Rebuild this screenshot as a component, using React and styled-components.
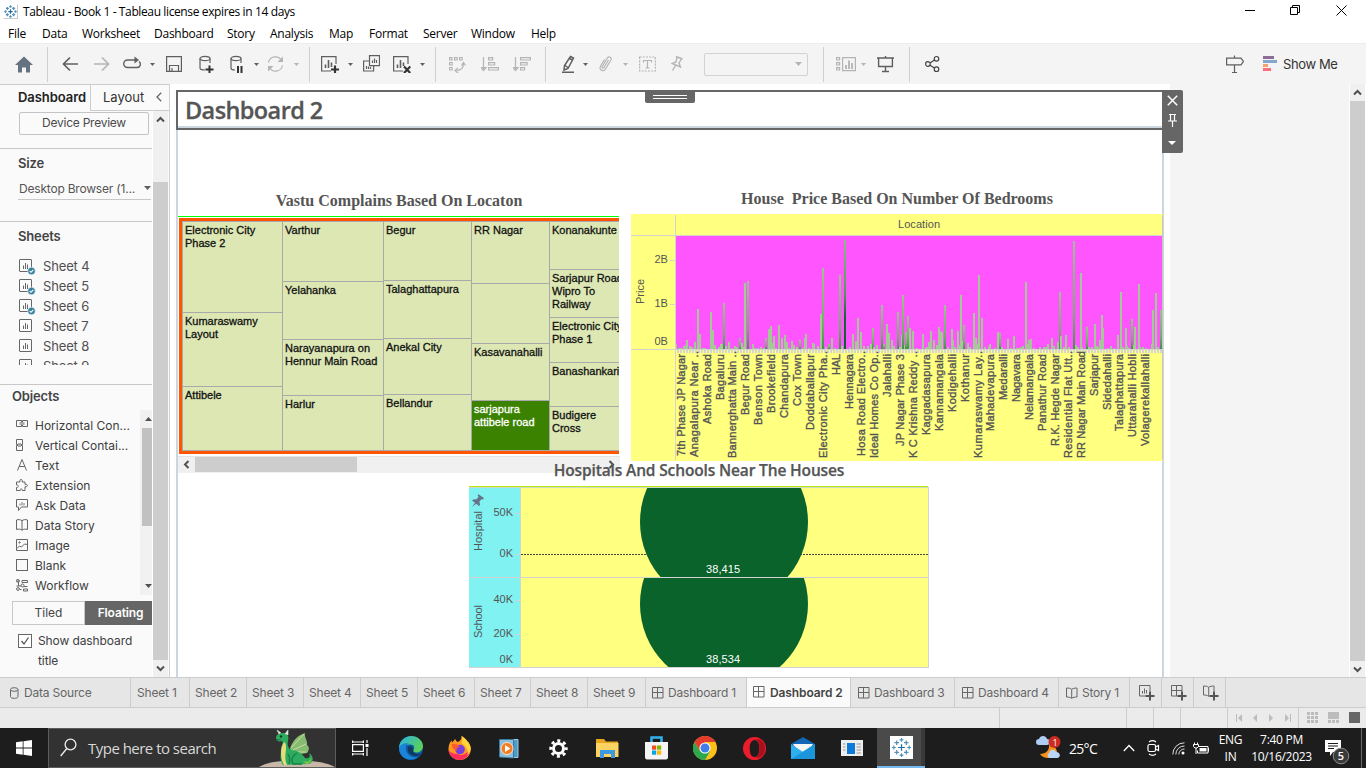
import React from "react";
import styled, { createGlobalStyle, css } from "styled-components";

const UI = `"Open Sans", "Noto Sans", sans-serif`;
const TAB = `Inter, "Open Sans", sans-serif`;
const ARIAL = `"Liberation Sans", Arial, sans-serif`;

const Global = createGlobalStyle`
  * { box-sizing: border-box; }
  body { margin: 0; overflow: hidden; font-family: ${UI}; }
  svg { display: block; flex: none; }
`;

const Window = styled.div`
  width: 1366px;
  height: 768px;
  display: flex;
  flex-direction: column;
  background: #fff;
  overflow: hidden;
`;

/* ---------- title and menu ---------- */
const TitleBar = styled.div`
  height: 23px;
  display: flex;
  align-items: center;
  padding-left: 3px;
  font-size: 12px;
  letter-spacing: -0.38px;
  color: #000;
`;
const TitleText = styled.span`
  margin-left: 5px;
  flex: 1;
`;
const WinButtons = styled.div`
  display: flex;
  align-items: center;
  margin-top: -3px;
`;
const WinButton = styled.div`
  width: ${(p) => p.$w}px;
  display: flex;
  justify-content: center;
`;
const MenuBar = styled.div`
  height: 20px;
  display: flex;
  padding-left: 8px;
  font-size: 12px;
  line-height: 21px;
  letter-spacing: -0.25px;
  color: #000;
`;
const MenuItem = styled.span`
  width: ${(p) => p.$w}px;
  white-space: nowrap;
`;

/* ---------- toolbar ---------- */
const Toolbar = styled.div`
  height: 41px;
  border-top: 1px solid #ededed;
  background: #f4f4f4;
  display: flex;
  align-items: center;
`;
const Tool = styled.svg.attrs((p) => ({
  width: p.$w,
  height: 18,
  viewBox: `0 0 ${p.$w} 18`,
  fill: "none",
  stroke: p.$dim ? "#b4b4b4" : "#5f5f5f",
  strokeWidth: 1.2,
}))`
  margin-left: ${(p) => p.$ml}px;
`;
const Sep = styled.div`
  width: 1px;
  height: 35px;
  margin-left: ${(p) => p.$ml}px;
  background: #cfcfcf;
`;
const CaretSvg = styled.svg`
  margin-left: ${(p) => p.$ml || 0}px;
`;
const Combo = styled.div`
  width: 104px;
  height: 23px;
  margin-left: 21px;
  border: 1px solid #d2d2d2;
  border-radius: 2px;
  display: flex;
  align-items: center;
  justify-content: flex-end;
  padding-right: 5px;
`;
const ShowMe = styled.span`
  margin: -1px 0 0 6px;
  font: 13px ${TAB};
  letter-spacing: -0.4px;
  color: #333;
`;

/* ---------- body ---------- */
const Body = styled.div`
  height: 593px;
  display: flex;
  padding-right: 1px;
`;
const Side = styled.aside`
  width: 170px;
  border-top: 1px solid #ccc;
  border-right: 1px solid #d0d0d0;
  background: #fafafa;
  font-family: ${TAB};
  color: #4a4a4a;
  display: flex;
  flex-direction: column;
`;
const SideTabs = styled.div`
  display: flex;
  height: 26px;
  flex: none;
  font-size: 13px;
`;
const SideTab = styled.div`
  width: ${(p) => (p.$active ? 90 : 79)}px;
  display: flex;
  align-items: center;
  justify-content: space-between;
  padding: 0 ${(p) => (p.$active ? "0 2px 18px" : "7px 1px 12px")};
  white-space: nowrap;
  ${(p) =>
    p.$active
      ? css`font-weight: 600; color: #222; letter-spacing: -0.05px;`
      : css`border-left: 1px solid #ccc; border-bottom: 1px solid #ccc; color: #333;`}
`;
const SideBody = styled.div`
  display: flex;
  flex: 1;
  min-height: 0;
`;
const SideContent = styled.div`
  width: 152px;
  overflow: hidden;
`;
const DevicePreview = styled.div`
  margin: 1px 3px 0 19px;
  height: 23px;
  border: 1px solid #c4c4c4;
  border-radius: 2px;
  font-size: 12px;
  letter-spacing: -0.25px;
  line-height: 20px;
  text-align: center;
`;
const Rule = styled.div`
  height: 1px;
  margin-top: ${(p) => p.$mt}px;
  background: #c8c8c8;
`;
const Head = styled.div`
  margin: ${(p) => p.$mt}px 0 0 ${(p) => p.$ml}px;
  height: 16px;
  line-height: 16px;
  font-size: 13px;
  font-weight: 600;
  letter-spacing: -0.15px;
  color: #444;
`;
const SizeSelect = styled.div`
  margin: 6px 1px 0 18px;
  height: 23px;
  border-bottom: 1px solid #c8c8c8;
  display: flex;
  align-items: center;
  justify-content: space-between;
  font-size: 12px;
  color: #555;
  padding-left: 1px;
  letter-spacing: -0.2px;
`;
const SheetList = styled.div`
  margin: 12px 0 0 19px;
  height: 109px;
  overflow: hidden;
`;
const SheetRow = styled.div`
  height: 20px;
  display: flex;
  align-items: center;
  gap: 7px;
  font-size: 13px;
  letter-spacing: -0.15px;
  color: #4f4f4f;
`;
const ObjectArea = styled.div`
  display: flex;
  margin-top: 6px;
  height: 185px;
`;
const ObjectList = styled.div`
  width: 140px;
  padding: 5px 0 0 15px;
`;
const ObjectRow = styled.div`
  height: 20px;
  display: flex;
  align-items: center;
  gap: 6px;
  font-size: 12px;
  color: #404040;
  white-space: nowrap;
`;
const ObjectScroll = styled.div`
  width: 12px;
  background: #f1f1f1;
  display: flex;
  flex-direction: column;
  padding: 7px 0 7px 2px;
`;
const ObjectThumb = styled.div`
  height: 98px;
  margin: 7px 0 auto;
  background: #c1c1c1;
`;
const ModeSwitch = styled.div`
  display: flex;
  margin: 6px 0 0 12px;
  height: 24px;
  font-size: 12px;
  line-height: 22px;
  text-align: center;
`;
const Mode = styled.div`
  width: 73px;
  flex: none;
  border: 1px solid ${(p) => (p.$on ? "#666" : "#c8c8c8")};
  background: ${(p) => (p.$on ? "#666" : "#fafafa")};
  color: ${(p) => (p.$on ? "#fff" : "#444")};
  font-weight: ${(p) => (p.$on ? 600 : 400)};
  padding-right: ${(p) => (p.$on ? 2 : 0)}px;
  letter-spacing: ${(p) => (p.$on ? -0.15 : 0)}px;
`;
const ShowTitle = styled.div`
  display: flex;
  gap: 6px;
  margin: 6px 0 0 18px;
  font-size: 12px;
  line-height: 20px;
  letter-spacing: -0.1px;
  color: #404040;
`;
const VScroll = styled.div`
  width: 16px;
  flex: none;
  background: #f0f0f0;
  border-left: 1px solid #fff;
  display: flex;
  flex-direction: column;
`;
const ScrollBtn = styled.div`
  height: ${(p) => p.$h || 17}px;
  width: ${(p) => (p.$w ? p.$w + "px" : "auto")};
  margin-left: ${(p) => (p.$end ? "auto" : 0)};
  display: flex;
  align-items: center;
  justify-content: center;
`;
const Thumb = styled.div`
  background: #cdcdcd;
  ${(p) => (p.$h ? `height: ${p.$h}px;` : "")}
  ${(p) => (p.$w ? `width: ${p.$w}px;` : "")}
  ${(p) => (p.$mt ? `margin-top: ${p.$mt}px;` : "")}
`;

/* ---------- canvas ---------- */
const Stage = styled.main`
  flex: 1;
  background: #f4f4f4;
  overflow: hidden;
`;
const Page = styled.div`
  width: 1000px;
  height: 593px;
  padding: 6px 6px 0;
  background: #fff;
`;
const Canvas = styled.div`
  width: 988px;
  height: 587px;
  border-left: 2px solid #ccd6e0;
  border-right: 2px solid #ccd6e0;
  position: relative;
`;
const TitleZone = styled.div`
  width: 988px;
  height: 40px;
  margin: 0 -2px;
  border: 2px solid #666;
  box-shadow: inset 0 -2px 0 #ccd6e0;
  padding-left: 7px;
  font: 600 23.5px/36px "Open Sans", sans-serif;
  -webkit-text-stroke: 0.3px;
  letter-spacing: -0.6px;
  color: #555;
`;
const Grip = styled.div`
  position: absolute;
  left: 467px;
  top: 0;
  width: 50px;
  height: 13px;
  border-radius: 0 0 2px 2px;
  background: #666;
  display: flex;
  flex-direction: column;
  align-items: center;
  padding-top: 5px;
  gap: 2px;
`;
const GripLine = styled.div`
  width: 34px;
  height: 1px;
  background: #fff;
`;
const ZoneTools = styled.div`
  position: absolute;
  left: 984px;
  top: 0;
  width: 21px;
  height: 63px;
  border-radius: 0 2px 2px 0;
  background: #666;
  display: flex;
  flex-direction: column;
  align-items: center;
  padding: 5px 1px 0 0;
`;
const ZoneTool = styled.svg`
  margin-top: ${(p) => p.$mt || 0}px;
`;
const TopRow = styled.div`
  display: flex;
  align-items: flex-start;
  gap: 11px;
  margin-top: 58px;
`;
const ZoneTitle = styled.div`
  text-align: center;
  font: 700 16px/20px "Liberation Serif", serif;
  color: #555;
  white-space: pre;
`;
const TreeZone = styled.section`
  width: 442px;
  padding-top: 3px;
`;
const TreeMap = styled.div`
  display: flex;
  width: 441px;
  height: 239px;
  margin-top: 5px;
  overflow: hidden;
  border-top: 1px solid #0f0;
  padding: 1px 0 1px 1px;
`;
const TreeFrame = styled.div`
  display: flex;
  flex: none;
  width: 600px;
  height: 236px;
  border: 3px solid #ff5500;
  background: #dce7b4;
`;
const TreeCol = styled.div`
  width: ${(p) => p.$w}px;
  border-left: 1px solid #a9a9a9;
  border-bottom: 1px solid #a9a9a9;
`;
const TreeCell = styled.div`
  height: ${(p) => p.$h}px;
  border-top: 1px solid #a9a9a9;
  padding: 2px 0 0 2px;
  font: 11px/13px ${ARIAL};
  -webkit-text-stroke: 0.3px;
  white-space: pre;
  color: ${(p) => (p.$dark ? "#fff" : "#111")};
  background: ${(p) => (p.$dark ? "#3b8200" : "#dce7b4")};
`;
const HScroll = styled.div`
  width: 442px;
  height: 17px;
  margin-top: 1px;
  border-top: 1px solid #e4e4e4;
  background: #f0f0f0;
  display: flex;
`;
const PriceZone = styled.section`
  width: 532px;
  padding-top: 1px;
`;
const PriceChart = styled.svg`
  margin-top: 5px;
  font: 11px ${ARIAL};
`;
const HospZone = styled.section`
  width: 460px;
  margin: -13px 0 0 291px;
  position: relative;
`;
const HospTitle = styled(ZoneTitle)`
  font: 600 15.5px/20px "Open Sans", sans-serif;
  letter-spacing: -0.14px;
  -webkit-text-stroke: 0.25px;
`;
const HospChart = styled.svg`
  margin-top: 6px;
  font: 11px ${ARIAL};
`;

/* ---------- bottom bars ---------- */
const TabBar = styled.div`
  height: 31px;
  border-top: 1px solid #ccc;
  border-bottom: 1px solid #ccc;
  background: #e6e6e6;
  display: flex;
  font: 12px ${TAB};
  color: #666;
`;
const SheetTab = styled.div`
  width: ${(p) => p.$w}px;
  border-right: 1px solid #ccc;
  display: flex;
  align-items: center;
  gap: ${(p) => p.$gap ?? 5}px;
  padding: 0 0 ${(p) => (p.$on ? 1 : 0)}px ${(p) => p.$pl ?? 5}px;
  white-space: nowrap;
  letter-spacing: -0.2px;
  ${(p) => p.$on && css`background: #fafafa; color: #444; font-weight: 600; letter-spacing: -0.1px;`}
`;
const StatusBar = styled.div`
  height: 20px;
  background: #ebebeb;
  display: flex;
  justify-content: flex-end;
`;
const StatusCell = styled.div`
  width: ${(p) => p.$w}px;
  border-left: 1px solid #ccc;
  display: flex;
  align-items: center;
  justify-content: space-between;
  padding: 0 ${(p) => p.$pr || 0}px 1px ${(p) => p.$pl || 0}px;
`;
const Taskbar = styled.div`
  height: 40px;
  background: #1d1d1d;
  display: flex;
  align-items: center;
  color: #fff;
`;
const StartBtn = styled.div`
  width: 48px;
  display: flex;
  justify-content: center;
`;
const Search = styled.div`
  width: 288px;
  height: 40px;
  border: 1px solid #5c5c5c;
  background: #323232;
  display: flex;
  align-items: center;
  padding-left: 11px;
  font-size: 15px;
  letter-spacing: -0.52px;
  color: #d8d8d8;
`;
const SearchText = styled.span`
  flex: 1;
  margin-left: 11px;
`;
const AppButton = styled.div`
  width: ${(p) => p.$w || 49}px;
  height: 40px;
  display: flex;
  align-items: center;
  justify-content: center;
  ${(p) => p.$on && css`margin-left: 2px; background: #4a4a4a; border-bottom: 2px solid #76b9ed; box-shadow: inset -4px 0 0 #3a3a3a;`}
`;
const Tray = styled.div`
  margin-left: auto;
  display: flex;
  align-items: center;
  height: 40px;
  font-size: 12px;
  letter-spacing: -0.3px;
`;
const TrayIcon = styled.svg`
  margin: ${(p) => p.$mt || 0}px ${(p) => p.$mr || 0}px 0 ${(p) => p.$ml || 0}px;
`;
const Temp = styled.span`
  margin-left: 8px;
  width: 54px;
  font-size: 14px;
  letter-spacing: -0.7px;
`;
const TrayText = styled.div`
  width: ${(p) => p.$w}px;
  text-align: center;
  line-height: 17px;
  margin-top: -1px;
  white-space: pre;
`;
const Peek = styled.div`
  width: 5px;
  height: 40px;
  border-left: 1px solid #6a6a6a;
`;

/* ---------- icons ---------- */
const Caret = ({ ml, dim, big }) => (
  <CaretSvg $ml={ml} width={big ? 7 : 5} height={big ? 4 : 3} viewBox={big ? "0 0 7 4" : "0 0 5 3"}>
    <path d={big ? "M0 0h7L3.500 4z" : "M0 0h5L2.500 3z"} fill={dim ? "#b4b4b4" : "#606060"} />
  </CaretSvg>
);

const Chevron = ({ rot = 0 }) => (
  <svg width="9" height="9" viewBox="0 0 9 9">
    <path d="M1 6.5 4.5 3 8 6.5" transform={`rotate(${rot} 4.5 4.5)`} fill="none" stroke="#505050" strokeWidth="2" />
  </svg>
);

const TableauMark = ({ size, framed }) => {
  const plus = (x, y, r, w, c) => (
    <path key={`${x}-${y}`} d={`M${x - r} ${y}H${x + r}M${x} ${y - r}V${y + r}`} stroke={c} strokeWidth={w} />
  );
  return (
    <svg width={size} height={size} viewBox="0 0 24 24">
      {framed && <rect width="24" height="24" fill="#fff" />}
      {!framed && <path d="M23.500 1V23.500H1" fill="none" stroke="#999" />}
      {plus(12, 12, 3.5, framed ? 1.3 : 2, "#1f6fa0")}
      {[[12, 4], [12, 20], [4, 12], [20, 12]].map(([x, y]) => plus(x, y, 2, framed ? 1.2 : 2, "#4a92bd"))}
      {[[7, 7], [17, 7], [7, 17], [17, 17]].map(([x, y]) => plus(x, y, 2.4, framed ? 1.3 : 2, "#5b8fb5"))}
    </svg>
  );
};

const SheetIcon = ({ used }) => (
  <svg width="17" height="17" viewBox="0 0 17 17" fill="none" stroke="#666">
    <rect x=".5" y="1.5" width="12" height="12" rx=".5" />
    <path d="M4.500 7.500v3.500M6.500 5v6M8.500 6.500v4.500" />
    {used && <circle cx="12.500" cy="13" r="3.800" fill="#35809f" stroke="#fafafa" strokeWidth=".6" />}
    {used && <path d="M10.700 13l1.300 1.300 2.300-2.500" stroke="#fff" strokeWidth="1.100" />}
  </svg>
);

const objectIcons = {
  h: <><path d="M1.500 2.500h5v6h-5zM7.500 2.500h5v6h-5z" /><path d="M4.500 4h5v3h-5z" fill="#aaa" stroke="none" /></>,
  v: <><path d="M1.500 1.500h6v5h-6zM1.500 7.500h6v5h-6z" /><path d="M3 5h3v4H3z" fill="#aaa" stroke="none" /></>,
  text: <path d="M2.500 12.500 7 1.500l4.500 11M4.200 8.500h5.600" />,
  ext: <path d="M1.500 4h3.500c-1-3.500 3-3.500 2.200 0H10v2.500c3.200-1 3.200 3 0 2.200V12.500H7.200c.5-2.200-2.500-2.200-2 0H1.500V9.500c2.500.3 2.500-2.800 0-2.500z" />,
  ask: <><path d="M1.500 1.500h11v7.500H6.500l-3 3.500V9h-2z" /><path d="M5 5.500v2M7 4v3.500M9 5v2.500" strokeWidth="1.300" stroke="#999" /></>,
  story: <path d="M1.500 2c2-.7 4-.5 5.500.7 1.500-1.200 3.500-1.400 5.500-.7v9.500c-2-.7-4-.5-5.500.7-1.500-1.200-3.500-1.400-5.500-.7zM7 2.700v9.500" />,
  image: <><path d="M1.500 1.500h11v11h-11z" /><path d="M2 10.500l2.500-2.500 2 1 3-3 3 .5" /><circle cx="4.500" cy="4.500" r=".7" /></>,
  blank: <rect x="1.500" y="1.500" width="11" height="11" />,
  flow: <><path d="M2 3h3M7 2.500h5.500v2H7zM3.500 4v4l3 0M1.500 8h2M8.500 8.500h4M5 11.500h1.500M8.500 11h4v2h-4z" /><circle cx="2.800" cy="2.800" r="1.400" /><circle cx="7.500" cy="7.500" r="1.500" /><circle cx="3" cy="11" r="1.400" /></>,
};
const ObjectIcon = ({ name }) => (
  <svg width="14" height="14" viewBox="0 0 14 14" fill="none" stroke="#666">{objectIcons[name]}</svg>
);

const PlusMark = () => (
  <>
    <path d="M6.500 11h9M11 6.500v9" stroke="#e6e6e6" strokeWidth="4" />
    <path d="M6.500 11h9M11 6.500v9" stroke="#555" strokeWidth="2" />
  </>
);
const GridIcon = ({ plus }) => (
  <svg width={plus ? 16 : 12} height={plus ? 16 : 12} viewBox={plus ? "0 0 16 16" : "0 0 12 12"} fill="none" stroke="#666">
    <path d="M.5.5h10.500v10.500H.5zM.5 5.500h10.500M5.500.5v10.500" />
    {plus && <PlusMark />}
  </svg>
);
const BookIcon = ({ plus }) => (
  <svg width={plus ? 16 : 12} height={plus ? 16 : 12} viewBox={plus ? "0 0 16 16" : "0 0 12 12"} fill="none" stroke="#666">
    <path d="M.5 1c2 0 4 .3 5.200 1.300C7 1.300 9 1 11 1v9c-2 0-4 .3-5.300 1.300C4.500 10.300 2.500 10 .5 10zM5.700 2.300v9" />
    {plus && <PlusMark />}
  </svg>
);
const NewSheetIcon = () => (
  <svg width="16" height="16" viewBox="0 0 16 16" fill="none" stroke="#666">
    <path d="M.5.5h10.500v10.500H.5zM3.500 6v2.500M5.500 3.500v5M7.500 5v3.500" />
    <PlusMark />
  </svg>
);

/* ---------- data ---------- */
const treeColumns = [
  [100, [[91, "Electronic City\nPhase 2"], [74, "Kumaraswamy\nLayout"], [64, "Attibele"]]],
  [101, [[60, "Varthur"], [58, "Yelahanka"], [56, "Narayanapura on\nHennur Main Road"], [55, "Harlur"]]],
  [88, [[59, "Begur"], [58, "Talaghattapura"], [56, "Anekal City"], [56, "Bellandur"]]],
  [78, [[62, "RR Nagar"], [60, ""], [57, "Kasavanahalli"], [50, "sarjapura\nattibele road", true]]],
  [101, [[48, "Konanakunte"], [48, "Sarjapur Road\nWipro To\nRailway"], [45, "Electronic City\nPhase 1"], [44, "Banashankari"], [44, "Budigere\nCross"]]],
];

const locations = [
  ["7th Phase JP Nagar", 456], ["Anagalapura Near ..", 457, 1], ["Ashoka Road", 424], ["Bagaluru", 400],
  ["Bannerghatta Main ..", 458, 1], ["Begur Road", 415], ["Benson Town", 425], ["Brookefield", 413],
  ["Chandapura", 418], ["Cox Town", 406], ["Doddaballapur", 430], ["Electronic City Pha..", 458, 1],
  ["HAL", 375], ["Hennagara", 409], ["Hosa Road Electro..", 456, 1], ["Ideal Homes Co Op..", 458, 1],
  ["Jalahalli", 397], ["JP Nagar Phase 3", 446], ["K C Krishna Reddy ..", 458, 1], ["Kaggadasapura", 435],
  ["Kannamangala", 431], ["Kodigehalli", 412], ["Kothanur", 402], ["Kumaraswamy Lay..", 458, 1],
  ["Mahadevapura", 431], ["Medaralli", 400], ["Nagavara", 402], ["Nelamangala", 420],
  ["Panathur Road", 431], ["R.K. Hegde Nagar", 446], ["Residential Flat Utt..", 458, 1], ["RR Nagar Main Road", 458, 1],
  ["Sarjapur", 396], ["Sidedahalli", 410], ["Talaghattapura", 431], ["Uttarahalli Hobli", 437],
  ["Volagerekallahalli", 446],
];

/* Bar position and bar height, in thirds of a pixel, then the shade. */
const bars = [
  [0,15],[9,4],[15,4],[24,8],[30,12],[33,27],[42,9],[48,6],[57,21],[66,120],[72,45],[81,4],[87,4],[105,111],[111,57],[117,12],
  [129,6],[135,15],[141,15],[144,138,1],[150,9],[159,21],[168,4],[177,9],[183,6],[192,33,1],[198,18],[204,7],[207,198],[216,204,1],
  [231,15],[237,4],[246,4],[255,6],[264,4],[270,33,1],[279,60],[285,69],[291,18],[294,39],[300,4],[309,72],[318,33],[327,42],[333,21],
  [339,4],[348,24],[354,12],[363,6],[372,27,1],[381,4],[387,33],[390,45],[399,4],[411,18],[414,15],[426,9],[435,105],[441,243,1],
  [450,6],[459,15,1],[468,33],[477,4],[492,222,1],[498,9],[507,327,2],[522,6],[531,45],[540,24],[546,93],[555,51],[564,9],[576,9],
  [585,15],[591,63,1],[594,6],[603,12],[618,132,1],[624,15,1],[633,75],[639,48],
  [648,27],[654,9],[666,111,1],[672,6],[678,42],[681,162,1],[687,12],[690,51,1],[696,99,1],[702,63],[711,54],[722,4],[741,45],
  [750,4],[753,6],[759,21],[765,54],[774,27],[783,12],[789,66],[792,54],[798,51],[807,132,1],[816,6],[828,60],[831,27],[837,5],
  [846,54],[852,12],[855,162],[861,24],[864,72,1],[876,18],[882,6],[894,108],[900,33],[903,15],[909,222],[918,93],[927,6],[939,9],
  [942,15],[957,4],[966,51],[972,48,1],[978,6],[996,30],[1005,4],[1014,39],[1023,4],[1029,4],[1035,6],[1041,9],[1050,201],[1053,15],
  [1059,27],[1065,30],[1074,4],[1092,6],[1104,6],[1110,6],[1116,15],[1128,33],[1134,9],[1146,21],[1152,171,1],[1155,39],[1164,6],
  [1170,42],[1179,6],[1194,324,1],[1200,12],[1206,6],[1215,228],[1218,6],[1233,66,1],[1239,6],[1248,6],[1257,75],[1263,9],[1269,6],
  [1272,27],[1278,102],[1281,63],[1296,4],[1305,9],[1314,4],[1326,42],[1335,171],[1341,6],[1350,63],[1353,9],[1359,4],[1368,90,1],
  [1374,12],[1377,66],[1389,195],[1392,6],[1401,6],[1410,4],[1428,15],[1431,117],[1440,168],[1446,6],[1455,117,1],
];

const objects = [
  ["h", "Horizontal Con..."], ["v", "Vertical Contai..."], ["text", "Text"], ["ext", "Extension"], ["ask", "Ask Data"],
  ["story", "Data Story"], ["image", "Image"], ["blank", "Blank"], ["flow", "Workflow"],
];

/* ---------- sections ---------- */
const Tools = () => (
  <Toolbar>
    <Tool $ml={15} $w={18}><path d="M0 10 9 1.500 18 10h-3v7.500h-4v-5H7v5H3V10z" fill="#65727f" stroke="none" /></Tool>
    <Sep $ml={14} />
    <Tool $ml={14} $w={16}><path d="M16 9H1M8 2.500 1.500 9 8 15.500" strokeWidth="1.700" /></Tool>
    <Tool $ml={16} $w={16} $dim><path d="M0 9h15M8 2.500 14.500 9 8 15.500" strokeWidth="1.700" /></Tool>
    <Tool $ml={13} $w={18}><path d="M13 5H4.500a3.700 3.700 0 0 0 0 7.500H14a3.300 3.300 0 0 0 2-6" strokeWidth="1.400" /><path d="M11.500 1.500 16 5l-4.500 3.500z" fill="#5f5f5f" stroke="none" /></Tool>
    <Caret ml={9} />
    <Tool $ml={11} $w={16}><path d="M.6 1.600h14.800v14.800H.6zM3.500 16v-5.500h9V16M6 16v-3" /></Tool>
    <Tool $ml={17} $w={15}><path d="M1 3.500v9.500c0 1.500 2.500 2 5 2M11 3.500V8" /><ellipse cx="6" cy="3.500" rx="5" ry="2.200" /><path d="M6.500 14.500h8M10.500 10.500v8" stroke="#333" strokeWidth="2" /></Tool>
    <Tool $ml={16} $w={13}><path d="M1 3.500v9.500c0 1.500 2 2 4 2M11 3.500V8" /><ellipse cx="6" cy="3.500" rx="5" ry="2.200" /><path d="M8 11v7M11.500 11v7" stroke="#333" strokeWidth="2" /></Tool>
    <Caret ml={11} />
    <Tool $ml={8} $w={17} $dim><path d="M1.500 7.500A7 7 0 0 1 14.500 5.500M15.500 10.500A7 7 0 0 1 2.500 12.500" /><path d="M16 1.500v5.500h-5.500zM1 16.500V11h5.500z" fill="#b4b4b4" stroke="none" /></Tool>
    <Caret ml={10} dim />
    <Sep $ml={10} />
    <Tool $ml={11} $w={18}><path d="M15 9V1.600H.6V16H10" /><path d="M4.500 9.500V13M7.500 5v8M10.500 7.500v4.500" strokeWidth="1.600" /><path d="M10 14.500h8M14 10.500v8" stroke="#333" strokeWidth="2.200" /></Tool>
    <Caret ml={9} />
    <Tool $ml={10} $w={17}><path d="M6.500.6h10v10h-10zM6 6H.6v10h10v-5M9.500 5.500V8M11.500 3.500V8M13.500 5v3M3.500 11v3M5.500 11.500V14M7.500 12v2" /></Tool>
    <Tool $ml={13} $w={18}><path d="M15 9V1.600H.6V16H10" /><path d="M4.500 9.500V13M7.500 5v8M10.500 7.500V11" strokeWidth="1.600" /><path d="M11 11.500 17.300 18M17.300 11.500 11 18" stroke="#333" strokeWidth="2.200" /></Tool>
    <Caret ml={9} />
    <Sep $ml={10} />
    <Tool $ml={13} $w={17} $dim><path d="M.6 2.500h2.500V5H.6zM5.600 2.500h2.500V5H5.600zM10.600 2.500h2.500V5h-2.500zM.6 7.500h2.500V10H.6zM.6 12.500h2.500V15H.6zM14.500 8.500c0 4-2.500 7-7 7M12.500 10.500l2-3 2.200 3M9 13l-3 2.500L9 18" /></Tool>
    <Tool $ml={15} $w={18} $dim><path d="M2.500 2v13M0 12.500l2.500 3 2.500-3zM7.600 2.600h4V5h-4zM7.600 7.600h6V10h-6zM7.600 12.600h9.800V15H7.600z" /></Tool>
    <Tool $ml={14} $w={18} $dim><path d="M2.500 2v13M0 12.500l2.500 3 2.500-3zM7.600 2.600h9.800V5H7.600zM7.600 7.600h6.500V10H7.600zM7.600 12.600h4V15h-4z" /></Tool>
    <Sep $ml={14} />
    <Tool $ml={16} $w={13}><path d="M8.500 1.500 11.500 3 6 13.500 2 15l.5-4.500zM3 10.500l3 2M7.500 3.500l3 1.500" strokeWidth="1.500" /><path d="M0 17.300h12" strokeWidth="1.600" /></Tool>
    <Caret ml={8} />
    <Tool $ml={11} $w={13} $dim><path d="M9.500 5 5 12.500c-.8 1.500-2.500.5-1.700-1l5-8.500c1.500-2.500 5-.5 3.500 2.200L6.500 14c-2 3.500-7 .8-5-2.800L5.500 4.500" /></Tool>
    <Caret ml={11} dim />
    <Tool $ml={11} $w={17} $dim><rect x=".6" y="2" width="15.800" height="14" strokeDasharray="2 1.200" /><path d="M4.500 7.500v-2h8v2M8.500 5.500v7.500M6.500 13h4" /></Tool>
    <Tool $ml={15} $w={12} $dim><path d="M5 1.500 11.500 4M6 2.500 5 7 1 8.500l8.500 3.500-1.500-4L10.500 4M4.500 10.500 1.500 15.500" strokeWidth="1.400" /></Tool>
    <Combo><Caret big dim /></Combo>
    <Sep $ml={15} />
    <Tool $ml={12} $w={20} $dim><path d="M.6 2.600h3V5h-3zM.6 7.600h3V10h-3zM.6 12.600h3V15h-3zM6.600 2.600h12.800v13H6.600z" /><path d="M10 10v4M13 5.500V14M16 8v6" strokeWidth="1.800" /></Tool>
    <Caret ml={5} dim />
    <Tool $ml={11} $w={17}><path d="M0 3h17M1.600 3v8.500h13.800V3M8.500 1v2M8.500 11.500v5M5 16.500h7" strokeWidth="1.400" /></Tool>
    <Sep $ml={15} />
    <Tool $ml={15} $w={15}><circle cx="2.900" cy="9" r="2.300" stroke="#444" /><circle cx="11.500" cy="3.800" r="2.300" stroke="#444" /><circle cx="11.500" cy="14.200" r="2.300" stroke="#444" /><path d="M5 8l4.500-3M5 10.200l4.500 2.800" stroke="#444" /></Tool>
    <Tool $ml={286} $w={18}><path d="M.6 3.100H15l2.400 3.400L15 9.900H.6zM8.500.5v2.500M8.500 10v7.500M6 17.500h5" /></Tool>
    <Tool $ml={19} $w={14}><g stroke="none"><path d="M0 1h11v3H0z" fill="#8c6d96" /><path d="M0 5h14v3H0z" fill="#82a8d0" /><path d="M0 9h5v3H0z" fill="#f5a26f" /><path d="M0 13h8v3H0z" fill="#f96f7b" /></g></Tool>
    <ShowMe>Show Me</ShowMe>
  </Toolbar>
);

const Sidebar = () => (
  <Side>
    <SideTabs>
      <SideTab $active>Dashboard</SideTab>
      <SideTab>
        Layout
        <svg width="6" height="10" viewBox="0 0 6 10"><path d="M5.200.8 1 5l4.200 4.200" fill="none" stroke="#666" strokeWidth="1.300" /></svg>
      </SideTab>
    </SideTabs>
    <SideBody>
      <SideContent>
        <DevicePreview>Device Preview</DevicePreview>
        <Rule $mt={13} />
        <Head $mt={6} $ml={18}>Size</Head>
        <SizeSelect>Desktop Browser (1...<Caret big /></SizeSelect>
        <Rule $mt={21} />
        <Head $mt={6} $ml={18}>Sheets</Head>
        <SheetList>
          {[4, 5, 6, 7, 8, 9].map((n) => <SheetRow key={n}><SheetIcon used={n < 7} />Sheet {n}</SheetRow>)}
        </SheetList>
        <Rule $mt={19} />
        <Head $mt={3} $ml={12}>Objects</Head>
        <ObjectArea>
          <ObjectList>
            {objects.map(([icon, label]) => <ObjectRow key={label}><ObjectIcon name={icon} />{label}</ObjectRow>)}
          </ObjectList>
          <ObjectScroll>
            <svg width="10" height="4" viewBox="0 0 10 4"><path d="M3 4l3.500-4L10 4z" fill="#505050" /></svg>
            <ObjectThumb />
            <svg width="10" height="4" viewBox="0 0 10 4"><path d="M3 0l3.500 4L10 0z" fill="#505050" /></svg>
          </ObjectScroll>
        </ObjectArea>
        <ModeSwitch><Mode>Tiled</Mode><Mode $on>Floating</Mode></ModeSwitch>
        <ShowTitle>
          <svg width="14" height="17" viewBox="0 0 14 17"><rect x=".5" y="3.500" width="13" height="13" fill="#fff" stroke="#666" /><path d="M3.500 10l2.500 3 4.500-6.500" fill="none" stroke="#555" strokeWidth="1.300" /></svg>
          <span>Show dashboard<br />title</span>
        </ShowTitle>
      </SideContent>
      <VScroll>
        <ScrollBtn><Chevron /></ScrollBtn>
        <Thumb $mt={54} $h={478} />
        <ScrollBtn><Chevron rot={180} /></ScrollBtn>
      </VScroll>
    </SideBody>
  </Side>
);

const Price = () => (
  <PriceChart width="532" height="247" viewBox="631 214 532 247" fill="#555">
    <defs>
      <linearGradient id="bar1" x1="0" y1="0" x2="0" y2="1"><stop offset="0" stopColor="#9fc093" /><stop offset=".7" stopColor="#76ab6c" /><stop offset="1" stopColor="#438f4d" /></linearGradient>
      <linearGradient id="bar2" x1="0" y1="0" x2="0" y2="1"><stop offset="0" stopColor="#8fba82" /><stop offset=".5" stopColor="#4f9a52" /><stop offset=".7" stopColor="#0f6b31" /><stop offset="1" stopColor="#08602a" /></linearGradient>
    </defs>
    <rect x="631" y="214" width="532" height="247" fill="#ffff80" />
    <rect x="676" y="236" width="486" height="113" fill="#ff55ff" />
    <g shapeRendering="crispEdges">
      {bars.map(([x, h, tone], i) => (
        <rect key={i} x={Math.round(674.99 + x / 3)} y={349 - h / 3} width="2" height={h / 3} fill={tone ? `url(#bar${tone})` : "#a6c898"} />
      ))}
      <path d="M631 235.500h532M631 349.500h532M675.500 215v245M670 260.500h5M670 304.500h5" stroke="#d4d4cf" />
      <path d="M677 351.500h485" stroke="#d4d4d4" strokeWidth="3" strokeDasharray="2 1" />
      <path d="M1162.500 215v245" stroke="#c6c9b8" />
    </g>
    <text x="898" y="228" textLength="42">Location</text>
    <text x="654.500" y="263">2B</text>
    <text x="654.500" y="307">1B</text>
    <text x="654.500" y="345">0B</text>
    <text transform="translate(644 304) rotate(-90)">Price</text>
    <g stroke="#555" strokeWidth=".35">
      {locations.map(([name, end, high], i) => (
        <text key={name} transform={`translate(${684.8 + i * 12.9} ${end}) rotate(-90)`} textLength={end - (high ? 351 : 354)}>{name}</text>
      ))}
    </g>
  </PriceChart>
);

const Hospitals = () => (
  <HospChart width="460" height="182" viewBox="469 486 460 182" fill="#555">
    <defs>
      <clipPath id="topPane"><path d="M521 488h407v89H521z" /></clipPath>
      <clipPath id="lowPane"><path d="M521 578h407v89H521z" /></clipPath>
    </defs>
    <path d="M469 488h51v179h-51z" fill="#80f2f2" />
    <path d="M521 488h407v179H521z" fill="#ffff80" />
    <path d="M521 554.500h407" stroke="#444" strokeDasharray="2 1" shapeRendering="crispEdges" />
    <circle cx="724" cy="522" r="84" fill="#0a632b" clipPath="url(#topPane)" />
    <circle cx="724" cy="604" r="84" fill="#0a632b" clipPath="url(#lowPane)" />
    <g shapeRendering="crispEdges">
      <path d="M469 487h460v1h-460zM469 667h460v1h-460zM520 488h1v180h-1zM928 487h1v181h-1zM469 577h459v1h-459zM515 513h5v1h-5zM515 554h5v1h-5zM515 600h5v1h-5zM515 634h5v1h-5z" fill="#d3d3d3" />
      <path d="M469 486h459v1h-459z" fill="#b0f000" />
    </g>
    <g textAnchor="end">
      <text x="513" y="516">50K</text>
      <text x="513" y="557">0K</text>
      <text x="513" y="603">40K</text>
      <text x="513" y="637">20K</text>
      <text x="513" y="663">0K</text>
    </g>
    <text transform="translate(482 551) rotate(-90)" textLength="40">Hospital</text>
    <text transform="translate(482 638) rotate(-90)" textLength="33">School</text>
    <g fill="#fff"><text x="706" y="573" textLength="34">38,415</text><text x="706" y="663" textLength="34">38,534</text></g>
    <path d="M478 494l6 4-1 1.500-1.500-.3-2 2.300.5 3.500-1 1-2.800-2.300L472 507l3-4.200-2.800-2 .8-1.300 3.500-.3 2-2.400-.8-1.300z" fill="#66748a" />
  </HospChart>
);

const Workspace = () => (
  <Stage>
    <Page>
      <Canvas>
        <TitleZone>Dashboard 2</TitleZone>
        <Grip><GripLine /><GripLine /></Grip>
        <ZoneTools>
          <ZoneTool width="11" height="11" viewBox="0 0 11 11"><path d="M.8.800l9.400 9.400M10.200.800.8 10.200" stroke="#fff" strokeWidth="1.500" /></ZoneTool>
          <ZoneTool $mt={7} width="11" height="16" viewBox="0 0 11 16"><path d="M2 1.500h7M3.500 1.500v6M7.500 1.500v6M1 8h9M5.500 8v6" fill="none" stroke="#fff" strokeWidth="1.200" /></ZoneTool>
          <ZoneTool $mt={12} width="8" height="4" viewBox="0 0 8 4"><path d="M0 0h8L4 4z" fill="#fff" /></ZoneTool>
        </ZoneTools>
        <TopRow>
          <TreeZone>
            <ZoneTitle>Vastu Complains Based On Locaton</ZoneTitle>
            <TreeMap>
              <TreeFrame>
                {treeColumns.map(([w, cells], i) => (
                  <TreeCol key={i} $w={w}>
                    {cells.map(([h, label, dark], j) => <TreeCell key={j} $h={h} $dark={dark}>{label}</TreeCell>)}
                  </TreeCol>
                ))}
              </TreeFrame>
            </TreeMap>
            <HScroll>
              <ScrollBtn $w={17} $h={15}><Chevron rot={-90} /></ScrollBtn>
              <Thumb $w={162} $h={15} />
              <ScrollBtn $w={17} $h={15} $end><Chevron rot={90} /></ScrollBtn>
            </HScroll>
          </TreeZone>
          <PriceZone>
            <ZoneTitle>House  Price Based On Number Of Bedrooms</ZoneTitle>
            <Price />
          </PriceZone>
        </TopRow>
        <HospZone>
          <HospTitle>Hospitals And Schools Near The Houses</HospTitle>
          <Hospitals />
        </HospZone>
      </Canvas>
    </Page>
  </Stage>
);

const Tabs = () => (
  <TabBar>
    <SheetTab $w={131} $pl={10}>
      <svg width="9" height="12" viewBox="0 0 9 12" fill="none" stroke="#666"><path d="M.5 2.500v7c0 2.500 7.500 2.500 7.500 0v-7" /><ellipse cx="4.200" cy="2.500" rx="3.700" ry="1.800" /></svg>
      Data Source
    </SheetTab>
    {[59, 57, 57, 57, 57, 57, 56, 57, 58].map((w, i) => <SheetTab key={i} $w={w} $pl={i ? 5 : 6}>Sheet {i + 1}</SheetTab>)}
    {[101, 104, 104, 104].map((w, i) => <SheetTab key={i} $w={w} $on={i === 1} $gap={i === 1 ? 5 : 4} $pl={i > 1 ? 7 : 6}><GridIcon />Dashboard {i + 1}</SheetTab>)}
    <SheetTab $w={71} $pl={7} $gap={4}><BookIcon />Story 1</SheetTab>
    <SheetTab $w={32} $pl={9}><NewSheetIcon /></SheetTab>
    <SheetTab $w={32} $pl={9}><GridIcon plus /></SheetTab>
    <SheetTab $w={32} $pl={9}><BookIcon plus /></SheetTab>
  </TabBar>
);

const Status = () => (
  <StatusBar>
    {[127, 27, 27, 47].map((w, i) => <StatusCell key={i} $w={w} />)}
    <StatusCell $w={71} $pl={7} $pr={7}>
      <svg width="57" height="8" viewBox="0 0 57 8" fill="#bcbcbc"><path d="M1 0h1v8H1zM7 0v8L3 4zM22 0v8l-4-4zM34 0v8l4-4zM50 0v8l4-4zM55 0h1v8h-1z" /></svg>
    </StatusCell>
    <StatusCell $w={68} $pl={8} $pr={6}>
      <svg width="11" height="11" viewBox="0 0 11 11" fill="#bcbcbc"><path d="M0 0h3v3H0zM4 0h3v3H4zM8 0h3v3H8zM0 4h3v3H0zM4 4h3v3H4zM8 4h3v3H8zM0 8h3v3H0zM4 8h3v3H4zM8 8h3v3H8z" /></svg>
      <svg width="11" height="11" viewBox="0 0 11 11" fill="#bcbcbc"><path d="M0 0h11v7H0zM0 8h3v3H0zM4 8h3v3H4zM8 8h3v3H8z" /></svg>
      <svg width="11" height="11" viewBox="0 0 11 11"><path d="M0 0h11v11H0z" fill="#666" /></svg>
    </StatusCell>
  </StatusBar>
);

const Dragon = () => (
  <svg width="76" height="38" viewBox="0 0 76 38">
    <path d="M0 38C14 29 60 29 76 38z" fill="#c9b8a8" />
    <path d="M31 20C33 12 39 6 46 4c-1 4 3 8 2 12 3 2 2 6 0 8l-13 2z" fill="#86bb72" />
    <path d="M32 19 45 5M34 21l13-6M35 23l12 0" stroke="#d5e6a8" strokeWidth=".8" fill="none" />
    <path d="M17 9C17 5 21 4 24 4c5 0 6 4 5 8-1 4 0 7 3 9 6 0 11 3 14 8 4 1 6-1 4-5 5 3 5 9 0 11l-26 1C20 31 22 25 22 20c0-4 3-5 1-8-3 1-6 0-6-3z" fill="#2dab5e" />
    <path d="M25 13c-4 6-4 16 0 23h3c-3-7-1-12-1-17 0-3 0-5-2-6z" fill="#e6dc7a" />
    <path d="M38 24c-5 3-6 7-4 11h9M29 25c2 3 2 6 1 10" stroke="#168049" strokeWidth="1.300" fill="none" />
    <path d="M44 32c4 2 8 0 8-4 1 4-1 7-5 7z" fill="#86c440" />
    <path d="M20 5 18 1l4 3M26 5l3-4v5" fill="#eee" stroke="#ddd" strokeWidth=".6" />
    <circle cx="22" cy="7.500" r="1.200" fill="#123524" /><path d="M17 10.500l5 .5" stroke="#135c36" strokeWidth=".7" />
  </svg>
);

const TaskbarView = () => (
  <Taskbar>
    <StartBtn><svg width="16" height="16" viewBox="0 0 16 16" fill="#fff"><path d="M0 2.300 6.700 1.300V7.600H0zM7.500 1.200 16 0v7.600H7.500zM0 8.400h6.700v6.300L0 13.700zM7.500 8.400H16V16l-8.500-1.200z" /></svg></StartBtn>
    <Search>
      <svg width="17" height="20" viewBox="0 0 17 20" fill="none" stroke="#eee" strokeWidth="1.300"><circle cx="10.500" cy="6.500" r="5.400" /><path d="M6.800 10.500.7 18" /></svg>
      <SearchText>Type here to search</SearchText>
      <Dragon />
    </Search>
    <AppButton $w={48}><svg width="17" height="16" viewBox="0 0 17 16" fill="none" stroke="#fff" strokeWidth="1.200"><path d="M.6 4.600h10.800v6.800H.6zM.6.500v2.500M11.400.5v2.500M1 2h10M.6 15.500V13M11.400 15.500V13M1 14h10M15 0v3M15 8v8" /><path d="M13.500 4h3v3h-3z" fill="#fff" stroke="none" /></svg></AppButton>
    <AppButton $w={54}>
      <svg width="24" height="24" viewBox="0 0 24 24">
        <defs><linearGradient id="eg" x1="0" y1="0" x2="1" y2=".5"><stop offset="0" stopColor="#2bb3e6" /><stop offset="1" stopColor="#5ad05a" /></linearGradient></defs>
        <circle cx="12" cy="12" r="12" fill="#0c59a4" />
        <path d="M0 12C0 5 6 0 12 0c7 0 12 5 12 10 0 4-3 6.500-6.500 6.500-3 0-4-1.500-3-3 1.500-2 .5-5-3-5C7 8.500 3 10 0 12z" fill="url(#eg)" />
        <path d="M0 12c1-3.500 6-5.500 10-4.500C6 9 6 13 8 16.500c2 3.300 6 5.500 11 4.500-3 3-11 4-15.500-.5C1 18 0 15 0 12z" fill="#1a84d8" />
        <path d="M9.500 10.500c-2 4 1 9 6.500 9.500 3 .2 5.500-1 6.500-2.500-3 1-10 1-8-4-1-3-4-4-5-3z" fill="#11395f" />
      </svg>
    </AppButton>
    <AppButton $w={43}>
      <svg width="24" height="24" viewBox="0 0 24 24">
        <path d="M12 24C5 24 .5 19 .5 13 .5 9 2 6 3.500 4.500c.3 1 .5 1.500 1 2 1-2 2-3 3-3.500 0 1.500 1 2.500 2.500 3 2-1 4-3 3.500-6 4 2 5 5 5.500 7l1-1.500c2 3 3 5 2.800 8C22.500 19.500 18 24 12 24z" fill="#ff9a1f" />
        <path d="M12 24C6 24 1 20 .6 14 4 19 9 17 12 19c5 .5 8-3 9-7 2 6-3 12-9.600 12z" fill="#ff2e5f" />
        <path d="M13.500 0c4 2 8 7 9 11 .6 3-1 6-3 8 1-6-2-9-6-12 1-2 1-5 0-7z" fill="#ffd43a" />
        <circle cx="12" cy="13.500" r="4.800" fill="#7a3fe0" /><path d="M3.500 8c3-1 6 0 8.500 3-3 0-4 2-3 4-3-1-5-3-5.500-7z" fill="#ff5a2c" />
      </svg>
    </AppButton>
    <AppButton $w={55}>
      <svg width="20" height="21" viewBox="0 0 20 21"><path d="M8 1.500h11v18H8z" fill="#4e9bc7" stroke="#9fcbe3" /><path d="M.5 1.500h14v18.500L.5 19z" fill="#8bbfda" stroke="#3b7ba3" /><circle cx="8" cy="10.500" r="6" fill="#f47b20" stroke="#fbe3cf" /><path d="M6 7v7l5.500-3.500z" fill="#fff" /></svg>
    </AppButton>
    <AppButton $w={45}>
      <svg width="19" height="19" viewBox="0 0 19 19" fill="none" stroke="#fff"><circle cx="9.500" cy="9.500" r="5" strokeWidth="3" /><circle cx="9.500" cy="9.500" r="7.700" strokeWidth="3" strokeDasharray="3 3.050" strokeDashoffset="1.500" /></svg>
    </AppButton>
    <AppButton $w={52}>
      <svg width="23" height="20" viewBox="0 0 23 20"><path d="M0 1h8l2 2.500h12V8H0z" fill="#e8a51e" /><path d="M0 5h22.500v14H0z" fill="#ffd262" /><path d="M4 20v-8h15v8h-4v-4H8v4z" fill="#3c9be0" /></svg>
    </AppButton>
    <AppButton $w={46}>
      <svg width="23" height="24" viewBox="0 0 23 24"><path d="M6.500 8V1.500h10V8" fill="none" stroke="#2fb3ee" strokeWidth="2.500" /><path d="M0 6h23v15c0 2-1 2.500-3 2.500H3C1 23.500 0 23 0 21z" fill="#f4f4f4" /><path d="M7 9.500h4.200v4.200H7z" fill="#f25022" /><path d="M12 9.500h4.200v4.200H12z" fill="#7fba00" /><path d="M7 14.500h4.200v4.200H7z" fill="#00a4ef" /><path d="M12 14.500h4.200v4.200H12z" fill="#ffb900" /></svg>
    </AppButton>
    <AppButton $w={52}>
      <svg width="24" height="24" viewBox="0 0 24 24"><circle cx="12" cy="12" r="12" fill="#fbc116" /><path d="M1.600 6A12 12 0 0 0 12 24l5.200-9-10.400 0z" fill="#2ca94f" /><path d="M1.600 6A12 12 0 0 1 22.400 6H12L7 15z" fill="#e33b2e" /><circle cx="12" cy="12" r="5.600" fill="#fff" /><circle cx="12" cy="12" r="4.500" fill="#3f7ee8" /></svg>
    </AppButton>
    <AppButton $w={46}>
      <svg width="23" height="23" viewBox="0 0 23 23"><path d="M11.500 0a11.500 11.500 0 1 0 0 23 11.500 11.500 0 1 0 0-23zm0 3c3 0 4.800 3.500 4.800 8.500s-1.800 8.500-4.800 8.500-4.800-3.500-4.800-8.500S8.500 3 11.500 3z" fill="#ed1c2c" fillRule="evenodd" /><path d="M12 3c6-3 10 3 10 8.500S18 23 12 20c3 0 4.500-4 4.500-8.500S15 3 12 3z" fill="#a8101c" /></svg>
    </AppButton>
    <AppButton $w={52}>
      <svg width="24" height="24" viewBox="0 0 24 24"><path d="M0 8 12 1l12 7v4H0z" fill="#1066b5" /><path d="M2 8h20l-5 8H7z" fill="#f5f5f5" /><path d="M0 8l12 8L24 8v15H0z" fill="#2fb0ee" /><path d="M0 23l24-15v15z" fill="#1b96dd" /></svg>
    </AppButton>
    <AppButton $w={46}>
      <svg width="22" height="16" viewBox="0 0 22 16"><path d="M0 0h22v16H0z" fill="#eee" /><path d="M6 3h8v11H6z" fill="#0f79d8" /><path d="M2 4h2.500M2 7h2.500M2 10h2.500M15.500 4H20M15.500 7H20M15.500 10H20M15.500 13H20" stroke="#999" /></svg>
    </AppButton>
    <AppButton $w={48} $on><TableauMark size={23} framed /></AppButton>
    <Tray>
      <svg width="25" height="24" viewBox="0 0 25 24"><path d="M13 8c1 6-3 10-9 10 4 6 14 5 17-2 0-3-3-7-8-8z" fill="#f7941d" /><path d="M3 9a3 3 0 0 1 0-6c1-4 7-4 8 0 4 0 4 6 0 6z" fill="#aecdf2" /><path d="M13 22a3 3 0 0 1 0-5c1-4 6-4 7-1 5 0 5 6 1 6z" fill="#bcd6f7" /><circle cx="18.500" cy="6" r="6" fill="#cc2b22" /><text x="16.500" y="9.500" fontSize="9" fill="#fff">1</text></svg>
      <Temp>25°C</Temp>
      <TrayIcon $mr={12} width="12" height="8" viewBox="0 0 12 8" fill="none" stroke="#fff" strokeWidth="1.300"><path d="M.8 7 6 1.500 11.200 7" /></TrayIcon>
      <TrayIcon $mr={12} width="13" height="16" viewBox="0 0 13 16" fill="none" stroke="#fff" strokeWidth="1.200"><rect x="1" y="4.500" width="7.500" height="7" rx="1.500" /><path d="M8.500 7l3-1.500v5l-3-1.500M2 2c2-1.500 5-1.500 7 0M2 14c2 1.500 5 1.500 7 0" /></TrayIcon>
      <TrayIcon $mr={8} width="13" height="13" viewBox="0 0 13 13" fill="none" stroke="#ddd"><path d="M.8 12.500A11.500 11.500 0 0 1 12.500.8M3.800 12.500A8.500 8.500 0 0 1 12.500 4M6.800 12.500A5.500 5.500 0 0 1 12.500 7" /><circle cx="11" cy="11" r="1.500" fill="#fff" stroke="none" /></TrayIcon>
      <TrayIcon width="17" height="13" viewBox="0 0 17 13" fill="none" stroke="#fff"><path d="M5 4.500h10v6.500H4.500V8.500M15.500 6v3.500M1.500.5v2M4.500.5v2M.5 2.500h5v2l-1.500 1.500H2L.5 4.500zM3 6v6" /><path d="M6.500 6h7v3.500h-7z" fill="#fff" stroke="none" /></TrayIcon>
      <TrayText $w={41}>{"ENG\nIN"}</TrayText>
      <TrayText $w={61}>{"7:40 PM\n10/16/2023"}</TrayText>
      <TrayIcon $mt={9} $mr={10} $ml={13} width="26" height="25" viewBox="0 0 26 25"><path d="M0 0h16v12H8l-3 4v-4H0z" fill="#fff" /><path d="M3 3.500h10M3 6h10M3 8.500h6" stroke="#1d1d1d" /><circle cx="16" cy="16" r="7.800" fill="#3a3a3a" stroke="#8a8a8a" /><text x="12.800" y="20" fontSize="11" fontWeight="600" fill="#fff">5</text></TrayIcon>
      <Peek />
    </Tray>
  </Taskbar>
);

const menu = [["File", 34], ["Data", 40], ["Worksheet", 72], ["Dashboard", 73], ["Story", 43], ["Analysis", 59], ["Map", 40], ["Format", 54], ["Server", 48], ["Window", 60], ["Help", 40]];

export default function App() {
  return (
    <Window>
      <Global />
      <TitleBar>
        <TableauMark size={15} />
        <TitleText>Tableau - Book 1 - Tableau license expires in 14 days</TitleText>
        <WinButtons>
          <WinButton $w={46}><svg width="10" height="10" viewBox="0 0 10 10"><path d="M0 5.500h10" stroke="#000" /></svg></WinButton>
          <WinButton $w={44}><svg width="10" height="10" viewBox="0 0 10 10" fill="none" stroke="#000"><path d="M.5 2.500h7v7h-7zM2.500 2.500v-2h7v7h-2" /></svg></WinButton>
          <WinButton $w={49}><svg width="11" height="11" viewBox="0 0 11 11"><path d="M.5.5l10 10M10.500.5l-10 10" stroke="#000" /></svg></WinButton>
        </WinButtons>
      </TitleBar>
      <MenuBar>
        {menu.map(([label, w]) => <MenuItem key={label} $w={w}>{label}</MenuItem>)}
      </MenuBar>
      <Tools />
      <Body>
        <Sidebar />
        <Workspace />
        <VScroll>
          <ScrollBtn><Chevron /></ScrollBtn>
          <Thumb $h={560} />
          <ScrollBtn $h={16}><Chevron rot={180} /></ScrollBtn>
        </VScroll>
      </Body>
      <Tabs />
      <Status />
      <TaskbarView />
    </Window>
  );
}
